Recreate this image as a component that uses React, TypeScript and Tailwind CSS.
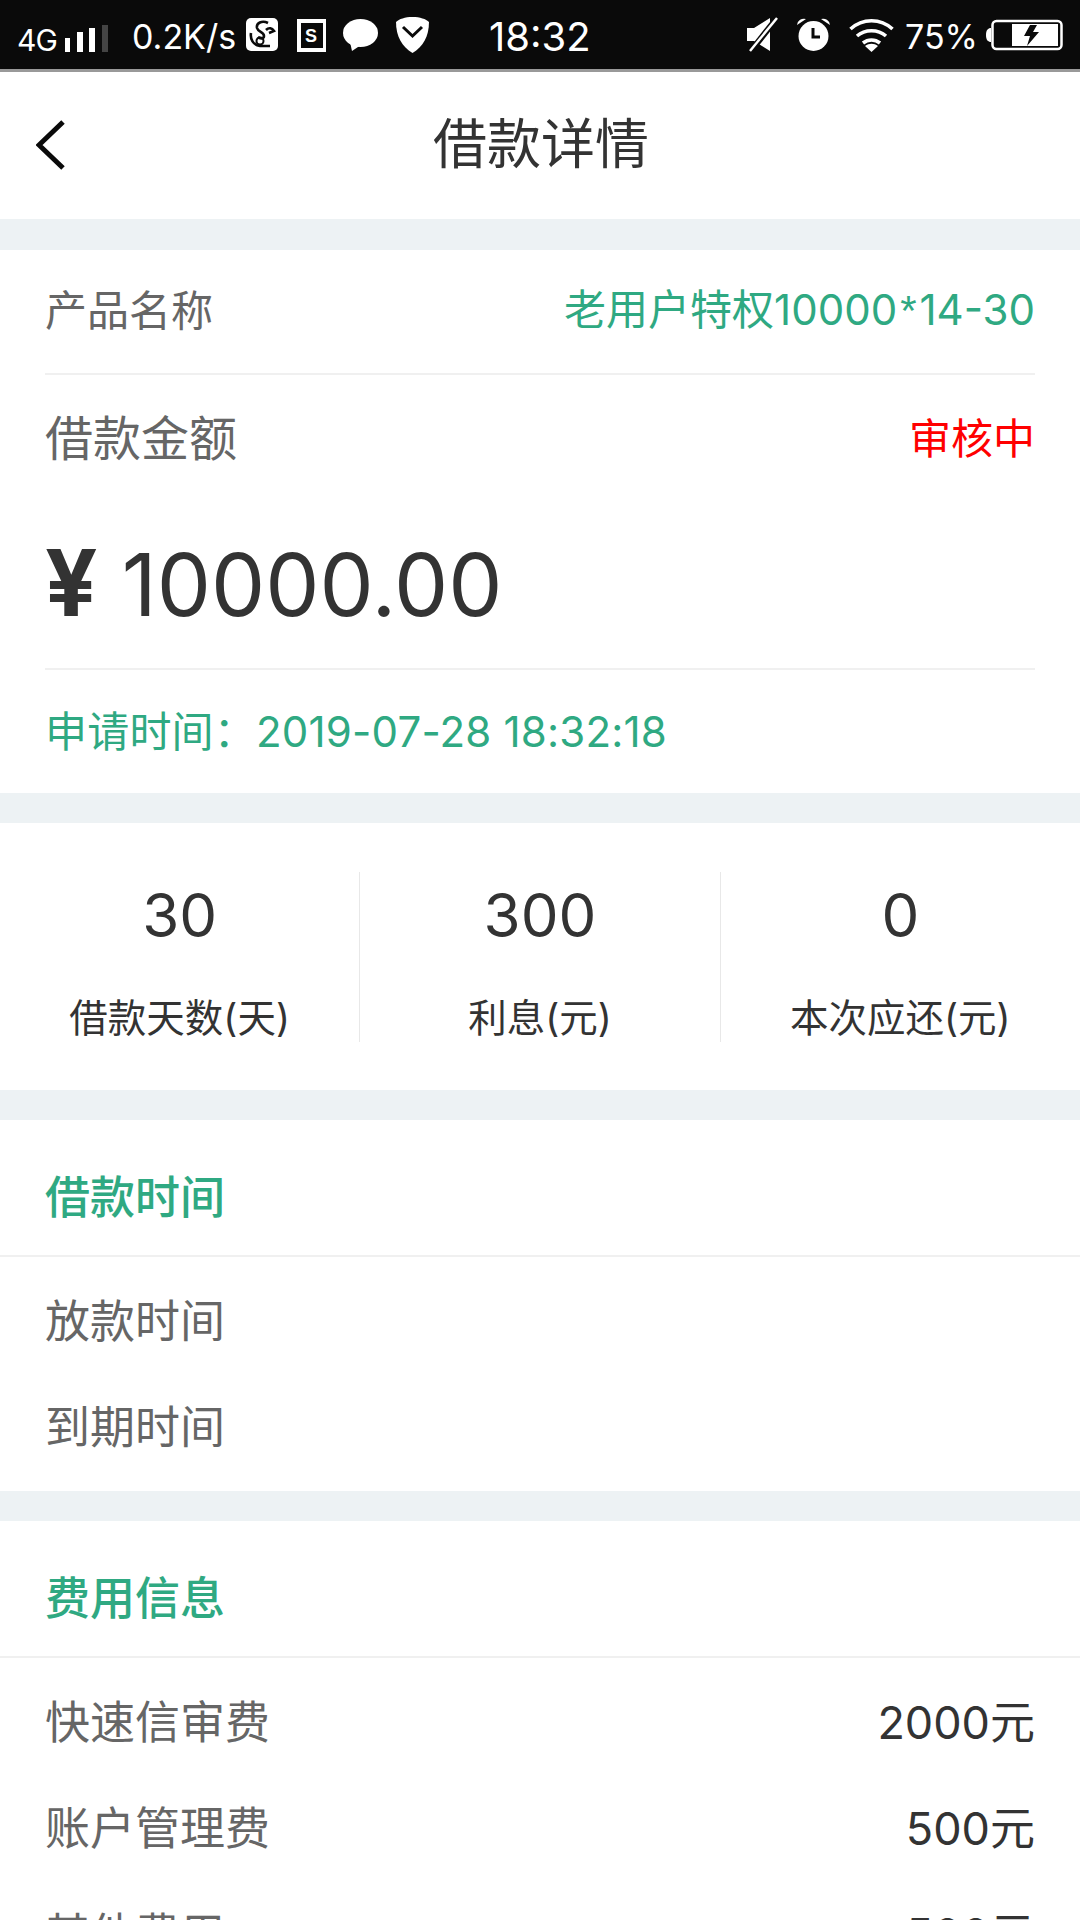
const InfoRow = ({ label, value }: { label: string; value?: string }) => (
  <div className="flex h-[106px] items-center justify-between px-[45px] text-[45px] leading-none">
    <span className="text-[#666666]">{label}</span>
    {value && <span className="text-[#333333]">{value}</span>}
  </div>
)

const SectionHead = ({ title }: { title: string }) => (
  <div className="flex h-[137px] items-center border-b-2 border-[#f0f0f0] px-[45px] pt-[19px]">
    <span className="text-[45px] leading-none font-medium text-[#2fa982]">{title}</span>
  </div>
)

const Stat = ({ value, label, line }: { value: string; label: string; line?: boolean }) => (
  <div className={`flex h-[170px] flex-1 flex-col items-center ${line ? "border-r border-[#e8e8e8]" : ""}`}>
    <span className="mt-[13px] text-[60px] leading-[60px] text-[#333333]">{value}</span>
    <span className="mt-[53px] text-[38.5px] leading-[40px] text-[#333333]">{label}</span>
  </div>
)

const Band = ({ tall }: { tall?: boolean }) => <div className={`${tall ? "h-[31px]" : "h-[30px]"} bg-[#edf2f4]`} />

const StatusBar = () => (
  <div className="flex h-[72px] items-start border-b-[3px] border-[#999999] bg-[#0a0a0a] text-white">
    <div className="flex h-[69px] w-full items-center">
      <span className="ml-[17px] mt-[11px] w-[40px] text-[30px] leading-none tracking-[-1px]">4G</span>
      <svg className="ml-[8px] mt-[8px]" width="44" height="28" viewBox="0 0 44 28" fill="#fff">
        <rect x="0" y="13" width="5" height="14" />
        <rect x="12" y="7" width="6" height="20" />
        <rect x="24" y="3" width="6" height="24" />
        <rect x="37" y="0" width="6" height="27" fill="#444" />
      </svg>
      <span className="ml-[23px] mt-[4px] w-[105px] text-[34px] leading-none">0.2K/s</span>
      <svg className="ml-[9px]" width="32" height="33" viewBox="0 0 32 33">
        <rect width="32" height="33" rx="5" fill="#fff" />
        <path d="M22 5c-6-3-12 0-11 5 1 4 7 4 7 8 0 3-4 3-6 1M5 15c-1 6 2 12 9 13h10M20 12c3-3 6-2 8 1l-5 2" fill="none" stroke="#0a0a0a" strokeWidth="2.6" />
        <circle cx="14" cy="23" r="3.5" fill="none" stroke="#0a0a0a" strokeWidth="2" />
      </svg>
      <svg className="ml-[18px]" width="30" height="34" viewBox="0 0 30 34">
        <path d="M1 3h28v29H3V1" fill="none" stroke="#fff" strokeWidth="4" />
        <text x="15" y="24" fontSize="18" fontWeight="700" fill="#fff" textAnchor="middle" fontFamily="Liberation Sans">S</text>
      </svg>
      <svg className="ml-[17px]" width="35" height="33" viewBox="0 0 35 33" fill="#fff">
        <ellipse cx="17.5" cy="15" rx="17.5" ry="14" />
        <path d="M7 24l2 9 9-6z" />
      </svg>
      <svg className="ml-[18px]" width="33" height="36" viewBox="0 0 33 36">
        <path d="M16.5 0C24 0 30 2 33 5c0 14-6 25-16.5 31C6 30 0 19 0 5 3 2 9 0 16.5 0z" fill="#fff" />
        <path d="M7 10l9.5 9L26 10" fill="none" stroke="#0a0a0a" strokeWidth="3" />
      </svg>
      <span className="ml-[60px] mt-[4px] w-[102px] text-[40px] leading-none">18:32</span>
      <svg className="ml-[156px]" width="32" height="36" viewBox="0 0 32 36">
        <path d="M0 11h7L23 1v33L7 24H0z" fill="#fff" />
        <path d="M3 35L30 1" stroke="#0a0a0a" strokeWidth="6" />
        <path d="M3 34L30 1" stroke="#fff" strokeWidth="2.5" />
      </svg>
      <svg className="ml-[17px]" width="35" height="35" viewBox="0 0 35 35">
        <circle cx="17.5" cy="19" r="15" fill="#fff" />
        <path d="M1 8a7 7 0 0 1 9-6zM34 8a7 7 0 0 0-9-6z" fill="#fff" />
        <path d="M17 11v9h7" fill="none" stroke="#0a0a0a" strokeWidth="3" />
      </svg>
      <svg className="ml-[18px]" width="45" height="34" viewBox="0 0 45 34" fill="none" stroke="#fff" strokeWidth="3.6">
        <path d="M1.5 11c12-11 30-11 42 0M8 18c8-7 21-7 29 0M14 25c5-4 12-4 17 0" />
        <path d="M16 28l6.500 6 6.500-6c-4-3-9-3-13 0z" fill="#fff" stroke="none" />
      </svg>
      <span className="ml-[11px] mt-[4px] w-[73px] text-[34px] leading-none">75%</span>
      <svg className="ml-[7px]" width="78" height="32" viewBox="0 0 78 32">
        <path d="M6 9v14c-3 0-5-2-5-7s2-7 5-7z" fill="#fff" />
        <rect x="7.500" y="2" width="69" height="28" rx="4" fill="none" stroke="#fff" strokeWidth="2.500" />
        <rect x="27" y="5" width="46" height="22" fill="#fff" />
        <path d="M45 6h7l-4 7h6L42 27l3-10h-6z" fill="#0a0a0a" />
      </svg>
    </div>
  </div>
)

export default function App() {
  return (
    <div className="h-[1920px] overflow-hidden bg-white font-['Inter','Noto_Sans_CJK_SC',sans-serif]">
      <StatusBar />

      <div className="flex h-[147px] items-center px-[36px] pb-[2px]">
        <svg width="30" height="50" viewBox="0 0 30 50" fill="none" stroke="#0a0a0a" strokeWidth="5">
          <path d="M27 2L3 25l24 23" />
        </svg>
        <span className="ml-[367px] text-[54px] leading-none text-[#333333]">借款详情</span>
      </div>
      <Band tall />

      <div className="px-[45px]">
        <div className="flex h-[125px] items-center justify-between border-b-2 border-[#f0f0f0] pb-[2px] text-[42px] leading-none">
          <span className="text-[#666666]">产品名称</span>
          <span className="text-[#2fa982]">
            老用户特权10000<span className="mx-[3px] font-['Liberation_Sans']">*</span>14-30
          </span>
        </div>
        <div className="flex items-center justify-between pt-[40px] pb-[3px] leading-none">
          <span className="text-[48px] leading-[48px] text-[#666666]">借款金额</span>
          <span className="text-[42px] text-[#ff0000]">审核中</span>
        </div>
        <div className="h-[204px] border-b-2 border-[#f0f0f0] pt-[74px] text-[86px] leading-[86px] text-[#333333]">
          <span className="text-[92px] font-bold">¥</span> 10000.00
        </div>
        <div className="flex h-[123px] items-center text-[42px] leading-none tracking-[0.2px] text-[#2fa982]">
          申请时间：2019-07-28 18:32:18
        </div>
      </div>
      <Band />

      <div className="flex h-[267px] pt-[49px]">
        <Stat value="30" label="借款天数(天)" line />
        <Stat value="300" label="利息(元)" line />
        <Stat value="0" label="本次应还(元)" />
      </div>
      <Band />

      <SectionHead title="借款时间" />
      <div className="h-[234px] pt-[11px]">
        <InfoRow label="放款时间" />
        <InfoRow label="到期时间" />
      </div>
      <Band />

      <SectionHead title="费用信息" />
      <div className="pt-[11px]">
        <InfoRow label="快速信审费" value="2000元" />
        <InfoRow label="账户管理费" value="500元" />
        <InfoRow label="其他费用" value="500元" />
      </div>
    </div>
  )
}
